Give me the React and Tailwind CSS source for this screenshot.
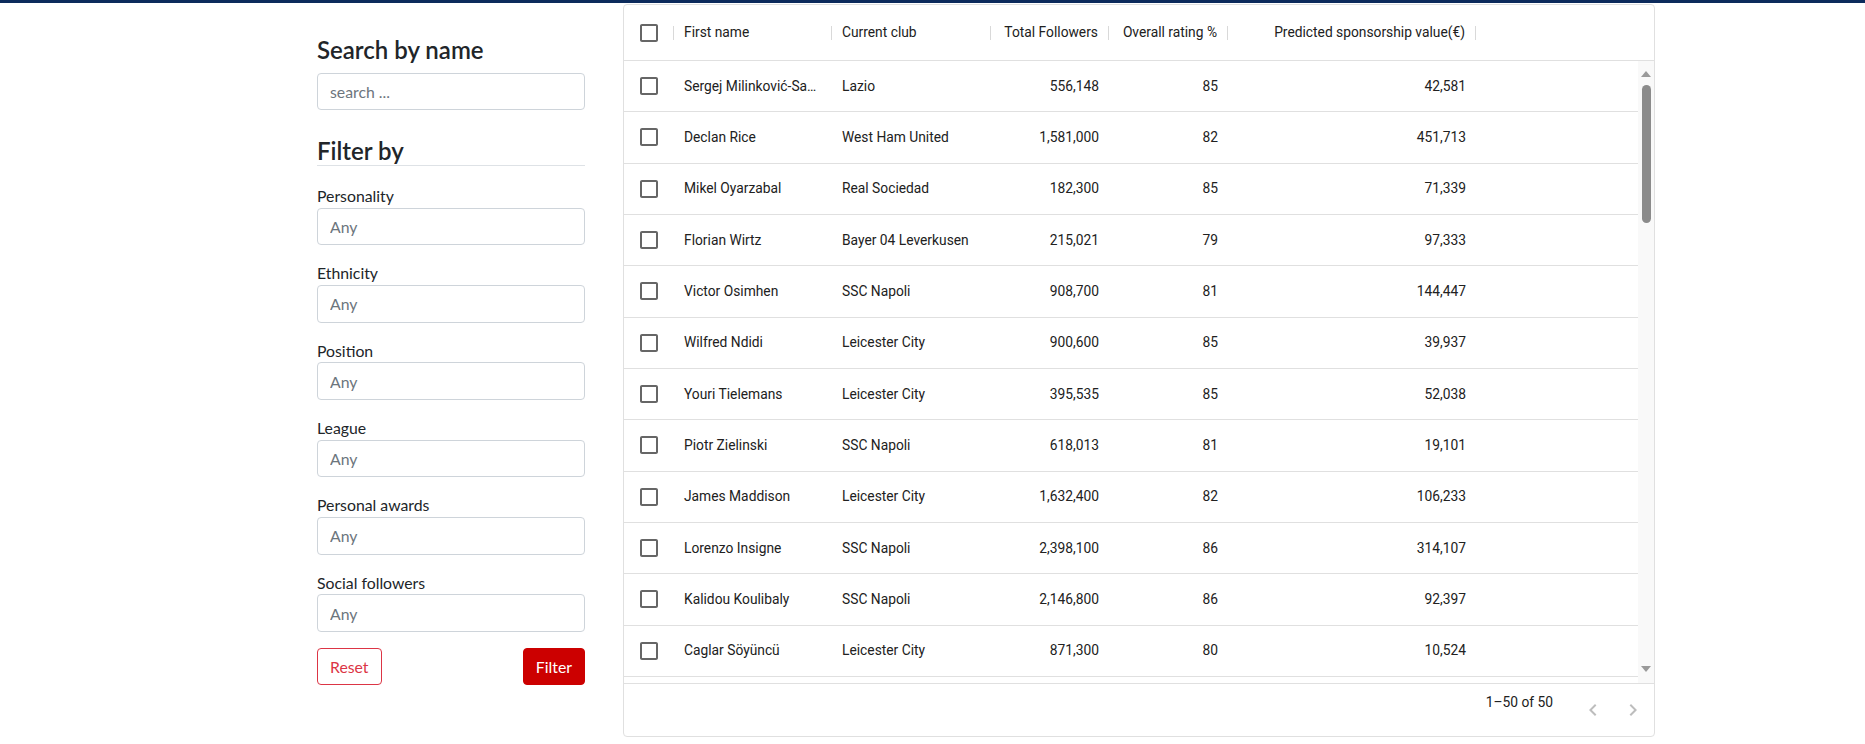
import React from "react";

// Player table rows as shown in the grid
const players = [
  { name: "Sergej Milinković-Savić", club: "Lazio", followers: "556,148", rating: 85, value: "42,581" },
  { name: "Declan Rice", club: "West Ham United", followers: "1,581,000", rating: 82, value: "451,713" },
  { name: "Mikel Oyarzabal", club: "Real Sociedad", followers: "182,300", rating: 85, value: "71,339" },
  { name: "Florian Wirtz", club: "Bayer 04 Leverkusen", followers: "215,021", rating: 79, value: "97,333" },
  { name: "Victor Osimhen", club: "SSC Napoli", followers: "908,700", rating: 81, value: "144,447" },
  { name: "Wilfred Ndidi", club: "Leicester City", followers: "900,600", rating: 85, value: "39,937" },
  { name: "Youri Tielemans", club: "Leicester City", followers: "395,535", rating: 85, value: "52,038" },
  { name: "Piotr Zielinski", club: "SSC Napoli", followers: "618,013", rating: 81, value: "19,101" },
  { name: "James Maddison", club: "Leicester City", followers: "1,632,400", rating: 82, value: "106,233" },
  { name: "Lorenzo Insigne", club: "SSC Napoli", followers: "2,398,100", rating: 86, value: "314,107" },
  { name: "Kalidou Koulibaly", club: "SSC Napoli", followers: "2,146,800", rating: 86, value: "92,397" },
  { name: "Caglar Söyüncü", club: "Leicester City", followers: "871,300", rating: 80, value: "10,524" },
];

const filters = ["Personality", "Ethnicity", "Position", "League", "Personal awards", "Social followers"];

function CheckBox() {
  return (
    <svg viewBox="0 0 24 24" className="w-6 h-6" fill="#666666">
      <path d="M19 5v14H5V5h14m0-2H5c-1.11 0-2 .9-2 2v14c0 1.1.89 2 2 2h14c1.1 0 2-.9 2-2V5c0-1.1-.9-2-2-2z" />
    </svg>
  );
}

function Separator() {
  return <span className="h-[14px] w-px shrink-0 bg-[#d9d9d9]" />;
}

function HeaderCell({ width, label, right }) {
  return (
    <div className={"flex items-center h-full shrink-0 " + width}>
      <div className={"flex-1 px-[10px] truncate " + (right ? "text-right" : "")}>{label}</div>
      <Separator />
    </div>
  );
}

function Sidebar() {
  return (
    <div className="w-[268px] shrink-0 pt-[33px] text-[#212529] font-['Lato','Noto_Sans',sans-serif]">
      <h4 className="text-[24px] leading-[1.2] font-semibold mb-2">Search by name</h4>
      <input
        className="block w-full h-[37.5px] px-3 border border-[#ced4da] rounded-[4px] text-[15.8px] placeholder:text-[#6c757d] outline-none"
        placeholder="search ..."
      />

      <h4 className="mt-[26.4px] mb-[17.7px] text-[24px] leading-[1.2] font-semibold border-b border-[#dee2e6]">
        Filter by
      </h4>
      {filters.map((f) => (
        <div key={f} className="mb-[16.1px]">
          <label className="block text-[15.8px] leading-[23.7px]">{f}</label>
          <input
            className="block w-full h-[37.5px] px-3 border border-[#ced4da] rounded-[4px] text-[15.8px] placeholder:text-[#6c757d] outline-none"
            placeholder="Any"
          />
        </div>
      ))}

      <div className="flex justify-between">
        <button className="h-[37.5px] px-3 border border-[#dc3545] text-[#dc3545] rounded-[4px] text-[15.8px]">
          Reset
        </button>
        <button className="h-[37.5px] px-3 border border-[#cc0000] bg-[#cc0000] text-white rounded-[4px] text-[15.8px]">
          Filter
        </button>
      </div>
    </div>
  );
}

function Scrollbar() {
  return (
    <div className="w-[16px] shrink-0 bg-[#f9f9f9] flex flex-col items-center">
      <div className="h-[24px] flex items-end justify-center pb-[8px]">
        <svg viewBox="0 0 10 6" className="w-[10px] h-[6px]" fill="#9a9a9a">
          <polygon points="5,0 10,6 0,6" />
        </svg>
      </div>
      <div className="w-[9px] h-[138px] rounded-full bg-[#8b8b8b]" />
      <div className="flex-1" />
      <div className="h-[24px] flex items-start justify-center pt-[7px]">
        <svg viewBox="0 0 10 6" className="w-[10px] h-[6px]" fill="#9a9a9a">
          <polygon points="0,0 10,0 5,6" />
        </svg>
      </div>
    </div>
  );
}

function PlayerGrid() {
  return (
    <div className="mt-px w-[1032px] h-[733px] flex flex-col border border-[#e0e0e0] rounded-[4px] text-[13.8px] text-[#212121] font-['Roboto',sans-serif]">
      {/* Column headers */}
      <div className="flex items-center h-[56px] border-b border-[#e0e0e0] shrink-0">
        <div className="flex items-center h-full w-[50px] shrink-0">
          <div className="flex-1 flex justify-center">
            <CheckBox />
          </div>
          <Separator />
        </div>
        <HeaderCell width="w-[158px]" label="First name" />
        <HeaderCell width="w-[159px]" label="Current club" />
        <HeaderCell width="w-[118px]" label="Total Followers" right />
        <HeaderCell width="w-[119px]" label="Overall rating %" right />
        <HeaderCell width="w-[248px]" label="Predicted sponsorship value(€)" right />
      </div>

      {/* Rows */}
      <div className="flex flex-1 min-h-0">
        <div className="flex-1 overflow-hidden">
          {players.map((p) => (
            <div key={p.name} className="flex items-center h-[51.33px] border-b border-[#e0e0e0]">
              <div className="w-[50px] shrink-0 flex justify-center">
                <CheckBox />
              </div>
              <div className="w-[158px] shrink-0 px-[10px] truncate">{p.name}</div>
              <div className="w-[159px] shrink-0 px-[10px] truncate">{p.club}</div>
              <div className="w-[118px] shrink-0 px-[10px] text-right">{p.followers}</div>
              <div className="w-[119px] shrink-0 px-[10px] text-right">{p.rating}</div>
              <div className="w-[248px] shrink-0 px-[10px] text-right">{p.value}</div>
            </div>
          ))}
        </div>
        <Scrollbar />
      </div>

      {/* Footer / pagination */}
      <div className="flex items-center justify-end h-[53px] border-t border-[#e0e0e0] shrink-0 pr-[1px]">
        <p className="mb-[16px] leading-[20px]">1–50 of 50</p>
        <div className="flex ml-[20px]">
          <button className="w-[40px] h-[40px] flex items-center justify-center text-[#bdbdbd]">
            <svg viewBox="0 0 24 24" className="w-6 h-6" fill="currentColor">
              <path d="M15.41 7.41 14 6l-6 6 6 6 1.41-1.41L10.83 12z" />
            </svg>
          </button>
          <button className="w-[40px] h-[40px] flex items-center justify-center text-[#bdbdbd]">
            <svg viewBox="0 0 24 24" className="w-6 h-6" fill="currentColor">
              <path d="M10 6 8.59 7.41 13.17 12l-4.58 4.59L10 18l6-6z" />
            </svg>
          </button>
        </div>
      </div>
    </div>
  );
}

export default function App() {
  return (
    <div className="w-[1865px] h-[744px] bg-white overflow-hidden">
      <div className="h-[3px] bg-[#0c2b5c]" />
      <div className="flex gap-[38px] pl-[317px]">
        <Sidebar />
        <PlayerGrid />
      </div>
    </div>
  );
}
